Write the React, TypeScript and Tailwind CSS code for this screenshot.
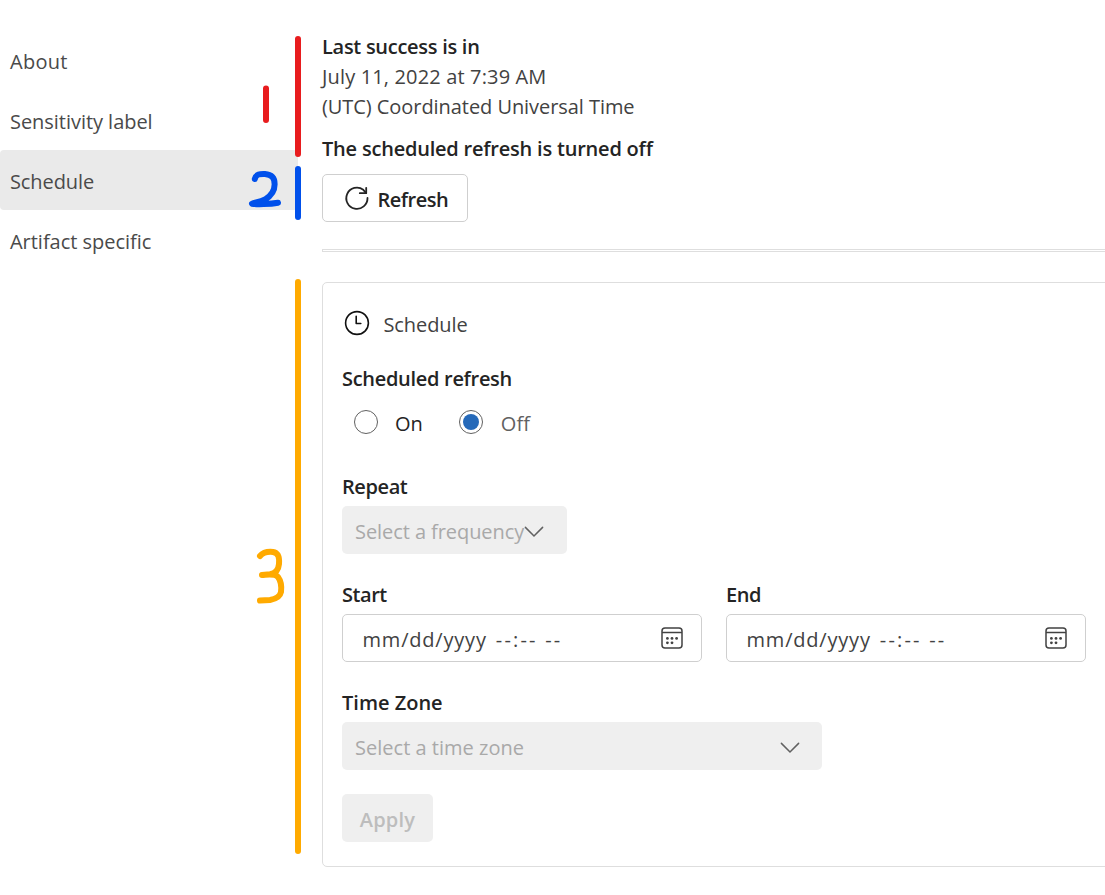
import React from "react";

const navItems = [
  { label: "About", tracking: "tracking-[0.25px]", active: false },
  { label: "Sensitivity label", tracking: "tracking-[-0.04px]", active: false },
  { label: "Schedule", tracking: "tracking-[-0.1px]", active: true },
  { label: "Artifact specific", tracking: "tracking-[-0.03px]", active: false },
];

function Sidebar() {
  return (
    <nav className="flex w-[298px] shrink-0 flex-col pt-[30px]">
      {navItems.map((item) => (
        <a
          key={item.label}
          className={`flex h-[60px] items-center rounded-[4px] pl-[10px] pt-[3px] text-[#4a4a4a] ${item.tracking} ${
            item.active ? "bg-[#eaeaea]" : ""
          }`}
        >
          {item.label}
        </a>
      ))}
    </nav>
  );
}

function RefreshIcon() {
  return (
    <svg width="26" height="26" viewBox="0 0 26 26" fill="none" stroke="#242424" strokeWidth="1.8" strokeLinecap="round" strokeLinejoin="round">
      <path d="M23.500 13A10.600 10.600 0 1 1 19.300 4.800L22 7.800" />
      <path d="M22.200 2.800v5.400h-6.400" />
    </svg>
  );
}

function ClockIcon() {
  return (
    <svg width="26" height="26" viewBox="0 0 26 26" fill="none" stroke="#111" strokeWidth="1.6">
      <circle cx="13" cy="13" r="11.400" />
      <path d="M12.200 6.300v7.200h4.600" strokeLinecap="round" strokeLinejoin="round" />
    </svg>
  );
}

function CalendarIcon() {
  return (
    <svg width="22" height="22" viewBox="0 0 22 22" fill="none" stroke="#424242" strokeWidth="1.5">
      <rect x="1" y="1" width="20" height="20" rx="3" />
      <path d="M1 5.500h20" />
      <g fill="#424242" stroke="none">
        <circle cx="6.400" cy="11.400" r="1.400" />
        <circle cx="11" cy="11.400" r="1.400" />
        <circle cx="15.600" cy="11.400" r="1.400" />
        <circle cx="6.400" cy="15.800" r="1.400" />
        <circle cx="11" cy="15.800" r="1.400" />
      </g>
    </svg>
  );
}

function Chevron() {
  return (
    <svg className="mt-[3px] shrink-0" width="20" height="12" viewBox="0 0 20 12" fill="none" stroke="#616161" strokeWidth="1.5" strokeLinecap="round">
      <path d="M1.400 1.400L10 10l8.600-8.600" />
    </svg>
  );
}

function DateField({ label, tracking }: { label: string; tracking: string }) {
  return (
    <div className="w-[360px]">
      <div className={`h-[34px] font-semibold leading-[30px] ${tracking}`}>{label}</div>
      <div className="flex h-12 items-center justify-between rounded-[5px] border border-[#cfcfcf] pl-[19.500px] pr-[18px]">
        <span className="whitespace-pre pt-[3px] text-[#424242]">
          <span className="tracking-[0.8px]">mm/dd/yyyy</span>
          <span className="ml-[9px] tracking-[2.2px]">--:-- --</span>
        </span>
        <CalendarIcon />
      </div>
    </div>
  );
}

function Annotations() {
  return (
    <svg className="pointer-events-none absolute left-0 top-0" width="320" height="895" viewBox="0 0 320 895" fill="none" strokeWidth="6" strokeLinecap="round" strokeLinejoin="round">
      <path stroke="#e81c1e" d="M298 39V154M266 88.500V120" />
      <path stroke="#0050eb" d="M298 169V217" />
      <path stroke="#0050eb" d="M254.800 179C256 174 260 173.800 265 174C272 174.500 274.600 178 274.600 184C274.800 191 271 196 265 199.500C260 202 255 202.500 252 203.700C256 204.500 270 204.300 278 202.800" />
      <path stroke="#ffaa00" d="M298 282V851" />
      <path stroke="#ffaa00" d="M260 556C263 552.500 268 551.500 273 552C279 553 279.500 558 279 564C278.500 570 275 573.500 270 574.300L262 575C270 574.500 275 573.500 278 577C281 581 281.500 588 281 592C280 597 276 599 270 600L260 600.500" />
    </svg>
  );
}

export default function App() {
  return (
    <div className="relative flex h-[895px] w-full overflow-hidden bg-white font-['Open_Sans','Noto_Sans',sans-serif] text-[20px] leading-[30px] text-[#242424]">
      <Sidebar />
      <main className="ml-6 min-w-0 flex-1 pt-[32px]">
        <div className="font-semibold tracking-[-0.28px]">Last success is in</div>
        <div className="tracking-[0.15px] text-[#424242]">July 11, 2022 at 7:39 AM</div>
        <div className="tracking-[-0.06px] text-[#424242]">(UTC) Coordinated Universal Time</div>
        <div className="mt-3 font-semibold tracking-[-0.21px]">The scheduled refresh is turned off</div>
        <button className="mt-[10px] flex h-12 w-[146px] items-center rounded-[5px] border border-[#cfcfcf] pl-[21px]">
          <RefreshIcon />
          <span className="ml-[7.5px] pt-[3px] font-semibold tracking-[-0.5px]">Refresh</span>
        </button>
        <hr className="mt-[27px] h-[3px] border border-r-0 border-[#dedede]" />
        <section className="mt-[30px] h-[585px] w-[800px] rounded-[5px] border border-[#dedede] pl-[19px]">
          <div className="flex h-[80px] items-center pl-[2px]">
            <ClockIcon />
            <span className="ml-[13.500px] pt-[3px] tracking-[-0.1px] text-[#424242]">Schedule</span>
          </div>
          <div className="pt-px font-semibold tracking-[-0.3px]">Scheduled refresh</div>
          <div className="mt-[16px] flex h-6 items-center pl-3">
            <span className="h-6 w-6 rounded-full border border-[#616161]" />
            <span className="ml-[17px] pt-[3px]">On</span>
            <span className="ml-[36px] flex h-6 w-6 items-center justify-center rounded-full border border-[#616161]">
              <span className="h-4 w-4 rounded-full bg-[#2569b9]" />
            </span>
            <span className="ml-[18px] pt-[3px] text-[#616161]">Off</span>
          </div>
          <div className="mt-[37px] h-[35px] pt-px font-semibold tracking-[-0.4px]">Repeat</div>
          <div className="flex h-12 w-[225px] items-center rounded-[5px] bg-[#efefef] pl-[13px]">
            <span className="whitespace-nowrap pt-[3px] tracking-[-0.07px] text-[#a9a9a9]">Select a frequency</span>
            <Chevron />
          </div>
          <div className="mt-[26px] flex gap-6">
            <DateField label="Start" tracking="tracking-[-0.45px]" />
            <DateField label="End" tracking="tracking-[-0.4px]" />
          </div>
          <div className="mt-[26px] h-[34px] font-semibold">Time Zone</div>
          <div className="flex h-12 w-[480px] items-center justify-between rounded-[5px] bg-[#efefef] pl-[13px] pr-[22px]">
            <span className="pt-[3px] tracking-[0.02px] text-[#a9a9a9]">Select a time zone</span>
            <Chevron />
          </div>
          <button className="mt-6 flex h-12 w-[91px] items-center justify-center rounded-[5px] bg-[#efefef] pt-[3px] font-semibold tracking-[0.200px] text-[#bdbdbd]">
            Apply
          </button>
        </section>
      </main>
      <Annotations />
    </div>
  );
}
